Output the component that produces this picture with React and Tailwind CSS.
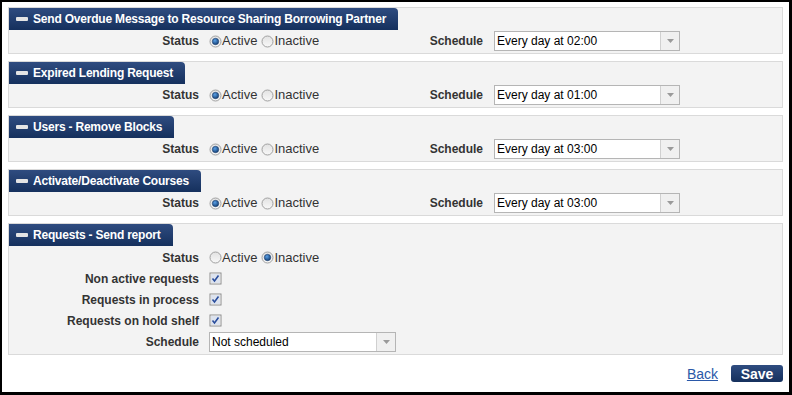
import React from "react";

const font = { fontFamily: '"Liberation Sans", Arial, sans-serif' };

function Radio({ checked }) {
  return (
    <svg width="13" height="13" viewBox="0 0 13 13" className="shrink-0">
      <defs>
        <linearGradient id="rg" x1="0" y1="0" x2="0" y2="1">
          <stop offset="0" stopColor="#e2e2e2" />
          <stop offset="1" stopColor="#f8f8f8" />
        </linearGradient>
        <radialGradient id="dot" cx="0.4" cy="0.35" r="0.7">
          <stop offset="0" stopColor="#5aa0e6" />
          <stop offset="1" stopColor="#0f3a70" />
        </radialGradient>
      </defs>
      <circle cx="6.5" cy="6.5" r="5.5" fill="url(#rg)" stroke="#a0a0a0" strokeWidth="1" />
      {checked && <circle cx="6.5" cy="6.5" r="3.2" fill="url(#dot)" stroke="#1c3c6a" strokeWidth="0.6" />}
    </svg>
  );
}

function Check() {
  return (
    <svg width="13" height="13" viewBox="0 0 13 13" className="shrink-0">
      <rect x="0.5" y="0.5" width="12" height="12" fill="#8e8e8e" />
      <rect x="1.5" y="1.5" width="10" height="10" fill="#fff" />
      <rect x="2" y="2" width="9" height="9" fill="#dde3ee" />
      <path d="M3.5 6.5 L5.5 9 L9.5 3.5" fill="none" stroke="#2a4d9c" strokeWidth="1.6" />
    </svg>
  );
}

function Select({ value, width }) {
  return (
    <div className={`flex h-[20px] ${width} border border-[#b5b5b5] bg-white`}>
      <div className="flex-1 flex items-center pl-[2px] text-[12px] text-black leading-none">{value}</div>
      <div className="w-[19px] border-l border-[#d0d0d0] bg-[#f0f0f0] flex items-center justify-center">
        <svg width="7" height="4" viewBox="0 0 7 4"><path d="M0 0 H7 L3.5 4 Z" fill="#9a9a9a" /></svg>
      </div>
    </div>
  );
}

function Tab({ title }) {
  return (
    <div className="flex">
      <div
        className="h-[22px] flex items-center pl-[7px] pr-[12px] rounded-tr-[4px] text-white font-bold text-[12px] tracking-[-0.2px]"
        style={{ background: "linear-gradient(#2f4c80, #15305d)" }}
      >
        <div className="w-[12px] h-[4px] bg-[#e4e4e4] rounded-[1px] mr-[5px]" />
        <span>{title}</span>
      </div>
    </div>
  );
}

function StatusRadios({ active }) {
  return (
    <div className="flex items-center text-[13px] text-[#333]">
      <Radio checked={active} />
      <span className="mr-[4px]">Active</span>
      <Radio checked={!active} />
      <span>Inactive</span>
    </div>
  );
}

function SimplePanel({ title, time }) {
  return (
    <div className="border border-[#dadada] bg-[#f3f3f3] pb-[1px]">
      <Tab title={title} />
      <div className="h-[22px] flex items-center">
        <div className="w-[386px] flex items-center">
          <div className="w-[200px] text-right font-bold text-[12px] text-[#333] pr-[10px]">Status</div>
          <StatusRadios active />
        </div>
        <div className="flex items-center">
          <div className="w-[99px] text-right font-bold text-[12px] text-[#333] pr-[11px]">Schedule</div>
          <Select value={time} width="w-[186px]" />
        </div>
      </div>
    </div>
  );
}

function Row({ label, children }) {
  return (
    <div className="h-[21px] flex items-center">
      <div className="w-[200px] text-right font-bold text-[12px] text-[#333] pr-[10px]">{label}</div>
      {children}
    </div>
  );
}

export default function App() {
  return (
    <div
      className="w-[792px] h-[395px] box-border border-l-2 border-t-2 border-r-[3px] border-b-[3px] border-black bg-white flex flex-col"
      style={font}
    >
      <div className="pt-[5px] px-[6px] flex flex-col gap-[7px]">
        <SimplePanel title="Send Overdue Message to Resource Sharing Borrowing Partner" time="Every day at 02:00" />
        <SimplePanel title="Expired Lending Request" time="Every day at 01:00" />
        <SimplePanel title="Users - Remove Blocks" time="Every day at 03:00" />
        <SimplePanel title="Activate/Deactivate Courses" time="Every day at 03:00" />
        <div className="border border-[#dadada] bg-[#f3f3f3] pb-[2px]">
          <Tab title="Requests - Send report" />
          <div className="pt-[1px]">
            <Row label="Status"><StatusRadios active={false} /></Row>
            <Row label="Non active requests"><Check /></Row>
            <Row label="Requests in process"><Check /></Row>
            <Row label="Requests on hold shelf"><Check /></Row>
            <Row label="Schedule"><Select value="Not scheduled" width="w-[187px]" /></Row>
          </div>
        </div>
      </div>
      <div className="flex justify-end items-center gap-[13px] pr-[6px] mt-[10px]">
        <a href="#" className="text-[14px] text-[#2a58a8] underline leading-none">Back</a>
        <button
          className="h-[17px] w-[52px] rounded-[3px] text-white font-bold text-[14px] leading-none flex items-center justify-center"
          style={{ background: "linear-gradient(#2f4c80, #15305d)" }}
        >
          Save
        </button>
      </div>
    </div>
  );
}
